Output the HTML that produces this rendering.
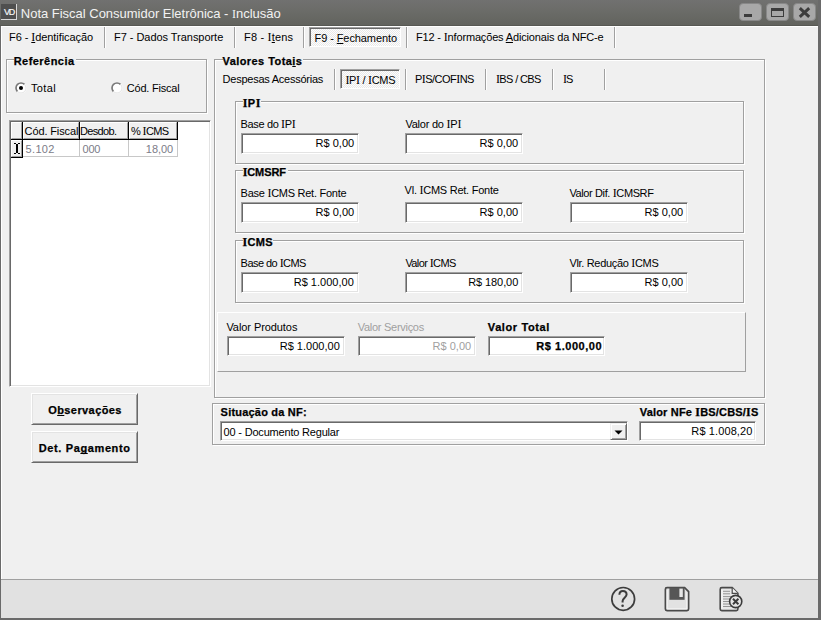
<!DOCTYPE html>
<html><head><meta charset="utf-8">
<style>
*{box-sizing:border-box;margin:0;padding:0}
html,body{width:821px;height:620px;overflow:hidden;background:#f0f0f0}
body{position:relative;font-family:"Liberation Sans",sans-serif;font-size:11px;color:#000;line-height:13px}
.a{position:absolute;white-space:pre}
.b{font-weight:bold;-webkit-text-stroke:0.25px #000}
.si{font-family:"Liberation Serif",serif;font-size:12px;line-height:1px}
.u{text-decoration:underline;text-decoration-skip-ink:none}
.eg{position:absolute;border:1px solid #a0a0a0}
.ew{position:absolute;border:1px solid #fff}
.lbl{position:absolute;background:#f0f0f0;font-weight:bold;white-space:pre}
.ed{position:absolute;background:#fff;border:1px solid;border-color:#a0a0a0 #fff #fff #a0a0a0;box-shadow:inset 1px 1px 0 #696969,inset -1px -1px 0 #e3e3e3;white-space:pre}
.btn{position:absolute;background:#f0f0f0;border:1px solid;border-color:#fff #696969 #696969 #fff;box-shadow:inset 1px 1px 0 #e3e3e3,inset -1px -1px 0 #a0a0a0}
.sepv{position:absolute;width:2px;border-left:1px solid #a0a0a0;border-right:1px solid #fff}
.hc{position:absolute;background:#f0f0f0;border:1px solid;border-color:#fff #a0a0a0 #a0a0a0 #fff}
.dither{border:1px solid;border-color:#a0a0a0 #fff #fff #a0a0a0;box-shadow:inset 1px 1px 0 #696969;background:repeating-conic-gradient(#fdfdfd 0 25%,#e9e9e9 0 50%) 0 0/2px 2px}
</style></head><body>
<div class="a" style="left:0;top:0;width:821px;height:26px;background:linear-gradient(#717170,#6a6b67 50%,#62635e);border-bottom:1px solid #575853"></div>
<div class="a" style="left:1px;top:4px;width:16px;height:16px;background:#4f4f4f;border-right:1px solid #d8d8d8;border-bottom:1px solid #d8d8d8"></div>
<div class="a" style="left:4px;top:7px;width:13px;font:9px 'Liberation Sans',sans-serif;color:#f8f8f8;letter-spacing:-1.2px;line-height:11px;-webkit-text-stroke:0.2px #f8f8f8">VD</div>
<div class="a" style="left:20.80px;top:6px;letter-spacing:-0.013px;font-size:13px;line-height:16px;color:#f2f2f2"><span>Nota Fiscal Consumidor Eletrônica - <span class="si">I</span>nclusão</span></div>
<div class="a" style="left:739px;top:3px;width:23px;height:18px;background:#a8a8a8;border:1px solid #888;border-radius:4px"></div>
<div class="a" style="left:766px;top:3px;width:23px;height:18px;background:#a8a8a8;border:1px solid #888;border-radius:4px"></div>
<div class="a" style="left:793px;top:3px;width:23px;height:18px;background:#a8a8a8;border:1px solid #888;border-radius:4px"></div>
<div class="a" style="left:744px;top:14px;width:8px;height:3px;background:#3c3c3c"></div>
<div class="a" style="left:771px;top:8px;width:13px;height:9px;border:1px solid #3c3c3c;border-top:3px solid #3c3c3c"></div>
<svg class="a" style="left:798px;top:7px" width="13" height="11"><path d="M1.8 1.2 L11.2 9.8 M11.2 1.2 L1.8 9.8" stroke="#3c3c3c" stroke-width="3"/></svg>
<div class="a" style="left:0;top:26px;width:1px;height:594px;background:#6a6a6a"></div>
<div class="a" style="left:818px;top:0;width:3px;height:620px;background:#6a6a6a"></div>
<div class="a" style="left:0;top:618px;width:821px;height:2px;background:#6a6a6a"></div>
<div class="a" style="left:1px;top:26px;width:817px;height:1px;background:#fff"></div>
<div class="a" style="left:1px;top:26px;width:1px;height:553px;background:#fff"></div>
<div class="a" style="left:9.00px;top:31px;letter-spacing:-0.067px;"><span>F6 - <span class="u"><span class="si">I</span></span>dentificação</span></div>
<div class="sepv" style="left:104px;top:27px;height:21px"></div>
<div class="a" style="left:114.00px;top:31px;letter-spacing:-0.040px;"><span>F7 - Dados Transporte</span></div>
<div class="sepv" style="left:234px;top:27px;height:21px"></div>
<div class="a" style="left:244.00px;top:31px;letter-spacing:0.176px;"><span>F8 - <span class="si">I</span><span class="u">t</span>ens</span></div>
<div class="sepv" style="left:303px;top:27px;height:21px"></div>
<div class="a dither" style="left:309px;top:27px;width:92px;height:20px"></div>
<div class="a" style="left:314.60px;top:32px;letter-spacing:-0.095px;"><span>F9 - <span class="u">F</span>echamento</span></div>
<div class="sepv" style="left:406px;top:27px;height:21px"></div>
<div class="a" style="left:416.00px;top:31px;letter-spacing:-0.162px;"><span>F12 - <span class="si">I</span>nformações <span class="u">A</span>dicionais da NFC-e</span></div>
<div class="sepv" style="left:614px;top:27px;height:21px"></div>
<div class="ew" style="left:7px;top:60px;width:201px;height:54px"></div>
<div class="eg" style="left:6px;top:59px;width:201px;height:54px"></div>
<div class="a" style="left:14px;top:55px;width:62px;height:13px;background:#f0f0f0"></div>
<div class="a b" style="left:13.70px;top:55px;letter-spacing:0.458px;"><span>Referência</span></div>
<svg class="a" style="left:15px;top:82px" width="12" height="12"><circle cx="6" cy="6" r="5.8" fill="#fff"/><path d="M2.46 9.54 A5 5 0 0 1 9.54 2.46" stroke="#7a7a7a" stroke-width="1.7" fill="none"/><path d="M2.46 9.54 A5 5 0 0 0 9.54 2.46" stroke="#e3e3e3" stroke-width="1" fill="none"/><circle cx="6" cy="6" r="2" fill="#000"/></svg>
<div class="a" style="left:31.00px;top:82px;letter-spacing:0.360px;"><span>Total</span></div>
<svg class="a" style="left:111px;top:82px" width="12" height="12"><circle cx="6" cy="6" r="5.8" fill="#fff"/><path d="M2.46 9.54 A5 5 0 0 1 9.54 2.46" stroke="#7a7a7a" stroke-width="1.7" fill="none"/><path d="M2.46 9.54 A5 5 0 0 0 9.54 2.46" stroke="#e3e3e3" stroke-width="1" fill="none"/></svg>
<div class="a" style="left:126.80px;top:82px;letter-spacing:-0.224px;"><span>Cód. Fiscal</span></div>
<div class="a" style="left:9px;top:120px;width:202px;height:267px;background:#fff;border:1px solid;border-color:#a0a0a0 #fff #fff #a0a0a0;box-shadow:inset 1px 1px 0 #696969,inset -1px -1px 0 #e3e3e3"></div>
<div class="a" style="left:11px;top:122px;width:167px;height:18px;background:#000"></div>
<div class="hc" style="left:11px;top:122px;width:11px;height:17px"></div>
<div class="hc" style="left:23px;top:122px;width:56px;height:17px"></div>
<div class="hc" style="left:80px;top:122px;width:48px;height:17px"></div>
<div class="hc" style="left:129px;top:122px;width:48px;height:17px"></div>
<div class="a" style="left:24.60px;top:125px;letter-spacing:-0.128px;"><span>Cód. Fiscal</span></div>
<div class="a" style="left:80.00px;top:125px;letter-spacing:-0.667px;"><span>Desdob.</span></div>
<div class="a" style="left:131.00px;top:125px;letter-spacing:-0.640px;"><span>% <span class="si">I</span>CMS</span></div>
<div class="a" style="left:11px;top:140px;width:12px;height:18px;background:#000"></div>
<div class="hc" style="left:11px;top:140px;width:11px;height:17px"></div>
<svg class="a" style="left:0;top:0" width="30" height="160"><path d="M14 143h2v1h-2z M18 143h2v1h-2z M16 144h2v9h-2z M14 153h2v1h-2z M18 153h2v1h-2z" fill="#000"/></svg>
<div class="a" style="left:23px;top:156px;width:155px;height:1px;background:#c8c8c8"></div>
<div class="a" style="left:79px;top:140px;width:1px;height:17px;background:#c8c8c8"></div>
<div class="a" style="left:128px;top:140px;width:1px;height:17px;background:#c8c8c8"></div>
<div class="a" style="left:177px;top:140px;width:1px;height:17px;background:#c8c8c8"></div>
<div class="a" style="left:25.60px;top:143px;letter-spacing:0.320px;color:#7c7c88"><span>5.102</span></div>
<div class="a" style="left:82.60px;top:143px;letter-spacing:-0.320px;color:#7c7c88"><span>000</span></div>
<div class="a" style="right:648.00px;top:143px;letter-spacing:-0.080px;color:#7c7c88"><span>18,00</span></div>
<div class="btn" style="left:31px;top:393px;width:107px;height:32px"></div>
<div class="a b" style="left:48.20px;top:404px;letter-spacing:0.416px;"><span>O<span class="u">b</span>servações</span></div>
<div class="btn" style="left:31px;top:431px;width:107px;height:32px"></div>
<div class="a b" style="left:38.80px;top:442px;letter-spacing:0.615px;"><span>Det. Pa<span class="u">g</span>amento</span></div>
<div class="ew" style="left:215px;top:60px;width:551px;height:339px"></div>
<div class="eg" style="left:214px;top:59px;width:551px;height:339px"></div>
<div class="a" style="left:223px;top:55px;width:80px;height:13px;background:#f0f0f0"></div>
<div class="a b" style="left:222.50px;top:55px;letter-spacing:0.431px;"><span>Valores Tota<span class="u">i</span>s</span></div>
<div class="a" style="left:222.60px;top:73px;letter-spacing:-0.247px;"><span>Despesas Acessórias</span></div>
<div class="sepv" style="left:334px;top:69px;height:21px"></div>
<div class="a dither" style="left:340px;top:69px;width:60px;height:20px"></div>
<div class="a" style="left:345.40px;top:74px;letter-spacing:-0.323px;"><span><span class="si">I</span>P<span class="si">I</span> / <span class="si">I</span>CMS</span></div>
<div class="sepv" style="left:405px;top:69px;height:21px"></div>
<div class="a" style="left:415.00px;top:73px;letter-spacing:-0.534px;"><span>P<span class="si">I</span>S/COF<span class="si">I</span>NS</span></div>
<div class="sepv" style="left:485px;top:69px;height:21px"></div>
<div class="a" style="left:496.00px;top:73px;letter-spacing:-0.640px;"><span><span class="si">I</span>BS / CBS</span></div>
<div class="sepv" style="left:552px;top:69px;height:21px"></div>
<div class="a" style="left:563.00px;top:73px;letter-spacing:-0.960px;"><span><span class="si">I</span>S</span></div>
<div class="sepv" style="left:604px;top:69px;height:21px"></div>
<div class="ew" style="left:236px;top:102px;width:509px;height:63px"></div>
<div class="eg" style="left:235px;top:101px;width:509px;height:63px"></div>
<div class="a" style="left:243px;top:97px;width:18px;height:13px;background:#f0f0f0"></div>
<div class="a b" style="left:242.70px;top:97px;letter-spacing:0.480px;"><span><span class="si">I</span>P<span class="si">I</span></span></div>
<div class="a" style="left:240.60px;top:118px;letter-spacing:-0.368px;"><span>Base do <span class="si">I</span>P<span class="si">I</span></span></div>
<div class="ed" style="left:241px;top:133px;width:118px;height:21px;"></div>
<div class="a" style="right:466.80px;top:137px;letter-spacing:0.029px;"><span>R$ 0,00</span></div>
<div class="a" style="left:405.40px;top:118px;letter-spacing:-0.232px;"><span>Valor do <span class="si">I</span>P<span class="si">I</span></span></div>
<div class="ed" style="left:405px;top:133px;width:118px;height:21px;"></div>
<div class="a" style="right:302.80px;top:137px;letter-spacing:0.029px;"><span>R$ 0,00</span></div>
<div class="ew" style="left:236px;top:171px;width:509px;height:63px"></div>
<div class="eg" style="left:235px;top:170px;width:509px;height:63px"></div>
<div class="a" style="left:243px;top:166px;width:45px;height:13px;background:#f0f0f0"></div>
<div class="a b" style="left:242.70px;top:166px;letter-spacing:-0.096px;"><span><span class="si">I</span>CMSRF</span></div>
<div class="a" style="left:240.60px;top:187px;letter-spacing:-0.265px;"><span>Base <span class="si">I</span>CMS Ret. Fonte</span></div>
<div class="ed" style="left:241px;top:202px;width:118px;height:21px;"></div>
<div class="a" style="right:466.80px;top:206px;letter-spacing:0.029px;"><span>R$ 0,00</span></div>
<div class="a" style="left:404.60px;top:184px;letter-spacing:-0.249px;"><span>Vl. <span class="si">I</span>CMS Ret. Fonte</span></div>
<div class="ed" style="left:405px;top:202px;width:118px;height:21px;"></div>
<div class="a" style="right:302.80px;top:206px;letter-spacing:0.029px;"><span>R$ 0,00</span></div>
<div class="a" style="left:569.40px;top:187px;letter-spacing:-0.380px;"><span>Valor Dif. <span class="si">I</span>CMSRF</span></div>
<div class="ed" style="left:570px;top:202px;width:118px;height:21px;"></div>
<div class="a" style="right:137.80px;top:206px;letter-spacing:0.029px;"><span>R$ 0,00</span></div>
<div class="ew" style="left:236px;top:241px;width:509px;height:63px"></div>
<div class="eg" style="left:235px;top:240px;width:509px;height:63px"></div>
<div class="a" style="left:243px;top:236px;width:30px;height:13px;background:#f0f0f0"></div>
<div class="a b" style="left:242.40px;top:236px;letter-spacing:0.371px;"><span><span class="si">I</span>CMS</span></div>
<div class="a" style="left:240.60px;top:257px;letter-spacing:-0.549px;"><span>Base do <span class="si">I</span>CMS</span></div>
<div class="ed" style="left:241px;top:272px;width:118px;height:21px;"></div>
<div class="a" style="right:467.20px;top:276px;letter-spacing:0.016px;"><span>R$ 1.000,00</span></div>
<div class="a" style="left:405.40px;top:257px;letter-spacing:-0.604px;"><span>Valor <span class="si">I</span>CMS</span></div>
<div class="ed" style="left:405px;top:272px;width:118px;height:21px;"></div>
<div class="a" style="right:302.80px;top:276px;letter-spacing:-0.080px;"><span>R$ 180,00</span></div>
<div class="a" style="left:569.40px;top:257px;letter-spacing:-0.320px;"><span>Vlr. Redução <span class="si">I</span>CMS</span></div>
<div class="ed" style="left:570px;top:272px;width:118px;height:21px;"></div>
<div class="a" style="right:137.80px;top:276px;letter-spacing:0.029px;"><span>R$ 0,00</span></div>
<div class="a" style="left:217px;top:312px;width:529px;height:60px;border:1px solid;border-color:#fff #a0a0a0 #a0a0a0 #fff"></div>
<div class="a" style="left:226.40px;top:321px;letter-spacing:-0.072px;"><span>Valor Produtos</span></div>
<div class="ed" style="left:227px;top:336px;width:118px;height:20px;"></div>
<div class="a" style="right:481.20px;top:340px;letter-spacing:0.016px;"><span>R$ 1.000,00</span></div>
<div class="a" style="left:357.80px;top:321px;letter-spacing:-0.285px;color:#a0a0a0"><span>Valor Serviços</span></div>
<div class="ed" style="left:358px;top:336px;width:118px;height:20px;"></div>
<div class="a" style="right:349.80px;top:340px;letter-spacing:0.029px;color:#a0a0a0"><span>R$ 0,00</span></div>
<div class="a b" style="left:487.80px;top:321px;letter-spacing:0.608px;"><span>Valor Total</span></div>
<div class="ed" style="left:488px;top:336px;width:117px;height:20px;"></div>
<div class="a b" style="right:218.90px;top:340px;letter-spacing:0.528px;"><span>R$ 1.000,00</span></div>
<div class="ew" style="left:213px;top:404px;width:553px;height:42px"></div>
<div class="eg" style="left:212px;top:403px;width:553px;height:42px"></div>
<div class="a b" style="left:220.60px;top:406px;letter-spacing:0.204px;"><span>Situação da NF:</span></div>
<div class="ed" style="left:220px;top:421px;width:408px;height:20px;"></div>
<div class="a" style="left:223.60px;top:426px;letter-spacing:-0.190px;"><span>00 - Documento Regular</span></div>
<div class="a" style="left:610px;top:423px;width:17px;height:17px;background:#f0f0f0;border:1px solid;border-color:#f0f0f0 #696969 #696969 #f0f0f0;box-shadow:inset 1px 1px 0 #fff,inset -1px -1px 0 #a0a0a0"></div>
<svg class="a" style="left:614px;top:430px" width="9" height="5"><path d="M0.5 0.5 H8.5 L4.5 4.5Z" fill="#000"/></svg>
<div class="a b" style="left:639.80px;top:406px;letter-spacing:0.175px;"><span>Valor NFe <span class="si">I</span>BS/CBS/<span class="si">I</span>S</span></div>
<div class="ed" style="left:639px;top:421px;width:117px;height:20px;"></div>
<div class="a" style="right:68.50px;top:425px;letter-spacing:0.112px;"><span>R$ 1.008,20</span></div>
<div class="a" style="left:1px;top:579px;width:817px;height:1px;background:#a0a0a0"></div>
<div class="a" style="left:1px;top:580px;width:817px;height:38px;background:#e1e1e1"></div>
<svg class="a" style="left:606px;top:582px" width="150" height="34">
 <circle cx="17.2" cy="16.9" r="11.4" fill="none" stroke="#3c3c3c" stroke-width="1.7"/>
 <path d="M13.4 12.8 C13.4 10.3 15 9 16.9 9 C19 9 20.6 10.5 20.6 12.5 C20.6 15.2 16.6 16.2 16.6 19 V20.6" fill="none" stroke="#3c3c3c" stroke-width="2"/>
 <circle cx="16.6" cy="23.8" r="1.3" fill="#3c3c3c"/>
 <path d="M61 5.6 H78.6 L82.6 9.6 V27 Q82.6 28.6 81 28.6 H61 Q59.4 28.6 59.4 27 V7.2 Q59.4 5.6 61 5.6 Z" fill="#e2e2e2" stroke="#4a4a4a" stroke-width="1.7"/>
 <path d="M61.2 8 V26.8 H80.8 V10.4" fill="none" stroke="#f6f6f6" stroke-width="1"/>
 <rect x="63.4" y="5.6" width="15.2" height="12.2" fill="#565656"/>
 <rect x="73.4" y="6.6" width="3.4" height="8.4" fill="#e6e6e6"/>
 <path d="M115.8 5.6 H126.2 L131.9 11.3 V27 Q131.9 28.6 130.3 28.6 H115.8 Q114.2 28.6 114.2 27 V7.2 Q114.2 5.6 115.8 5.6 Z" fill="#e8e8e8" stroke="#4a4a4a" stroke-width="1.6"/>
 <path d="M116 7.8 V26.6" stroke="#fafafa" stroke-width="1"/>
 <path d="M126.2 5.8 V11.3 H131.7" fill="#f4f4f4" stroke="#4a4a4a" stroke-width="1.2"/>
 <path d="M117 9.3 H124 M117 11.8 H124 M117 14.6 H130 M117 17 H125 M117 19.5 H124 M117 22 H124 M117 24.5 H125" stroke="#8a8a8a" stroke-width="0.9"/>
 <circle cx="129.7" cy="19.5" r="6.1" fill="#e6e6e6" stroke="#3c3c3c" stroke-width="1.6"/>
 <path d="M127 16.8 L132.4 22.2 M132.4 16.8 L127 22.2" stroke="#3c3c3c" stroke-width="2"/>
</svg>
</body></html>
